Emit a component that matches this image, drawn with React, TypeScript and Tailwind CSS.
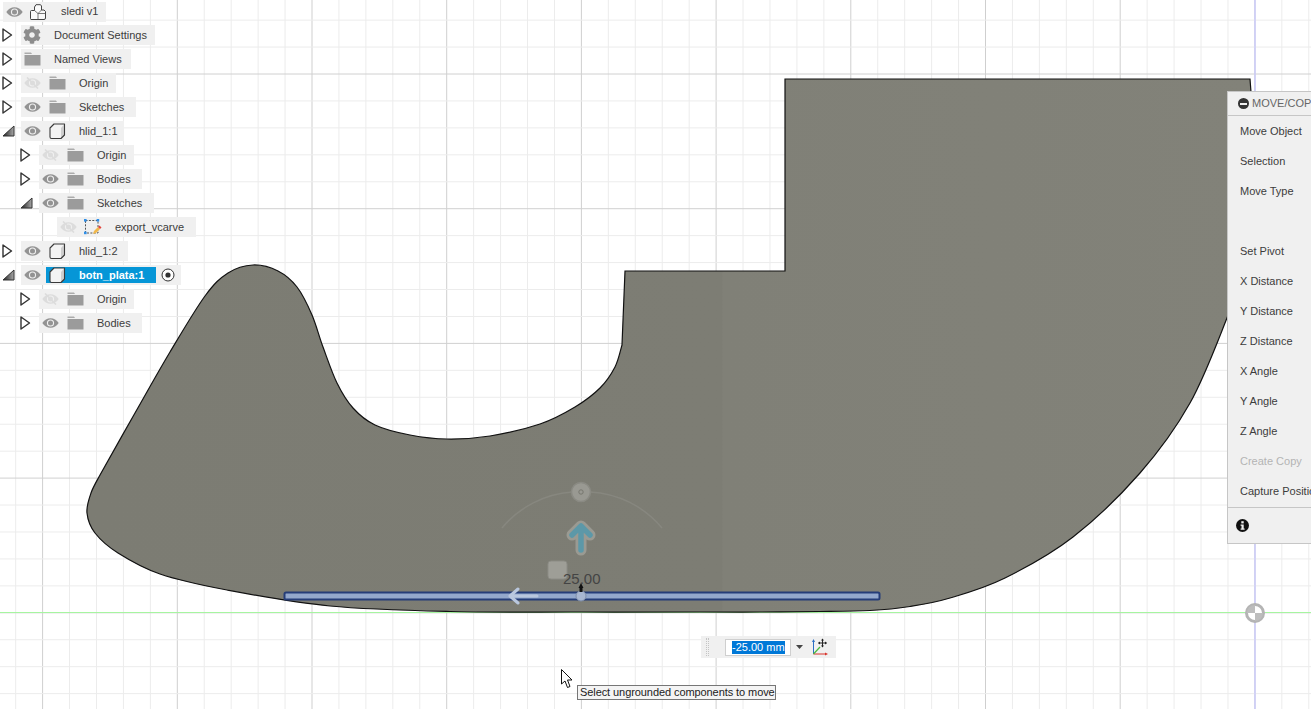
import { FaCog } from 'react-icons/fa'

const FONT = "font-['Liberation_Sans',Arial,sans-serif]"

// grid positions come from the one spacing the viewport uses
const STEP = 26.94
const gridX = Array.from({ length: 50 }, (_, i) => 1308.78 - i * STEP).filter((x) => x > -1)
const gridY = Array.from({ length: 27 }, (_, i) => 20.12 + i * STEP).filter((y) => y < 710)
const isMajor = (i: number) => (i - 2) % 5 === 0

type Pt = [number, number]

// catmull-rom through traced points, the outline has no straight runs here
function smooth(pts: Pt[]) {
  let d = ''
  for (let i = 0; i < pts.length - 1; i++) {
    const p0 = pts[Math.max(i - 1, 0)]
    const p1 = pts[i]
    const p2 = pts[i + 1]
    const p3 = pts[Math.min(i + 2, pts.length - 1)]
    const c1x = p1[0] + (p2[0] - p0[0]) / 6
    const c1y = p1[1] + (p2[1] - p0[1]) / 6
    const c2x = p2[0] - (p3[0] - p1[0]) / 6
    const c2y = p2[1] - (p3[1] - p1[1]) / 6
    d += ` C${c1x.toFixed(1)} ${c1y.toFixed(1)} ${c2x.toFixed(1)} ${c2y.toFixed(1)} ${p2[0]} ${p2[1]}`
  }
  return d
}

const rightAndBottom: Pt[] = [
  [1240, 280], [1227, 318], [1190, 403], [1140, 473], [1073, 537], [1005, 578], [950, 598], [910, 606.5],
  [870, 610.5], [820, 611.5], [760, 612], [700, 612], [580, 612], [450, 611.5], [330, 606], [227, 590],
  [160, 574], [118, 553], [95, 533], [87, 513], [91, 493], [100, 475],
]
const hump: Pt[] = [
  [100, 475], [135, 413], [170, 352], [205, 296], [228, 273], [253, 265], [278, 271], [297, 287], [312, 315],
  [323, 347], [337, 383], [353, 408], [375, 425], [410, 435], [447, 439], [490, 436], [540, 424], [575, 407],
  [600, 388], [615, 367], [622, 345],
]

const PLATE =
  'M785 79 L1250 79 L1251 92 L1254 200 L1240 280' +
  smooth(rightAndBottom) +
  smooth(hump) +
  ' L625 271 L785 271 Z'

function GridAndPart() {
  return (
    <svg className="absolute inset-0" width="1311" height="709" viewBox="0 0 1311 709">
      <defs>
        <linearGradient id="plateShade" gradientUnits="userSpaceOnUse" x1="87" y1="0" x2="1256" y2="0">
          <stop offset="0" stopColor="#7c7c73" />
          <stop offset="0.543" stopColor="#7d7d74" />
          <stop offset="0.544" stopColor="#808077" />
          <stop offset="1" stopColor="#828279" />
        </linearGradient>
      </defs>
      {gridX.map((x, i) => (
        <line key={x} x1={x} x2={x} y1="0" y2="709" stroke={isMajor(i) ? '#cfcfcf' : '#ececec'} strokeWidth="1" />
      ))}
      {gridY.map((y, i) => (
        <line key={y} x1="0" x2="1311" y1={y} y2={y} stroke={isMajor(i) ? '#d0d0d0' : '#ececec'} strokeWidth="1" />
      ))}
      <line x1="1255" x2="1255" y1="0" y2="709" stroke="#c9c9fb" strokeWidth="1.4" />
      <line x1="0" x2="1311" y1="612.5" y2="612.5" stroke="#a6f5a0" strokeWidth="1.2" />
      <path d={PLATE} fill="url(#plateShade)" stroke="#111" strokeWidth="1.2" strokeLinejoin="miter" />

      {/* move gizmo */}
      <path d="M502 528 A 100 100 0 0 1 572 492" fill="none" stroke="#87877f" strokeWidth="1.5" />
      <path d="M590 492 A 100 100 0 0 1 662 528" fill="none" stroke="#87877f" strokeWidth="1.5" />
      <circle cx="581" cy="492" r="9.5" fill="#999992" stroke="#8a8a83" strokeWidth="1.5" />
      <circle cx="581" cy="492" r="2.2" fill="none" stroke="#77776f" />
      <path d="M581 550 V527 M572 535 L581 526 L590 535" fill="none" stroke="#9a9a92" strokeWidth="11" strokeLinecap="round" strokeLinejoin="round" />
      <path d="M581 550 V527 M572 535 L581 526 L590 535" fill="none" stroke="#5c98a8" strokeWidth="5.5" strokeLinecap="round" strokeLinejoin="round" />
      <rect x="548" y="561" width="19" height="18" rx="3" fill="#9e9e97" stroke="#8c8c85" />

      {/* selected face seen edge on */}
      <rect x="284.5" y="592.5" width="595" height="7" rx="1.5" fill="#93a8cc" stroke="#253d78" strokeWidth="2" />
      <path d="M510 596 L518 589 M510 596 L518 603 M511 596 L537 596" stroke="#b9c7de" strokeWidth="3" strokeLinecap="round" />
      <circle cx="581" cy="596" r="5" fill="#a8b7d2" stroke="#7f8fab" />
      <path d="M581 583 L583.5 588 L582.5 588 L582.5 592 L579.5 592 L579.5 588 L578.5 588 Z" fill="#111" />

      {/* origin */}
      <circle cx="1255" cy="613" r="8.5" fill="#fff" stroke="#b4b4b4" strokeWidth="3" />
      <path d="M1255 613 L1247 613 A 8 8 0 0 1 1255 605 Z" fill="#bdbdbd" />
      <path d="M1255 613 L1263 613 A 8 8 0 0 1 1255 621 Z" fill="#bdbdbd" />

      {/* pointer */}
      <path d="M561.5 669.5 L561.5 684 L565 681 L567.5 687.5 L570 686.5 L567.5 680 L572 680 Z" fill="#fff" stroke="#111" strokeWidth="1" strokeLinejoin="round" />
    </svg>
  )
}

function Eye({ off }: { off?: boolean }) {
  const color = off ? '#dcdcdc' : '#939393'
  return (
    <svg width="17" height="12" viewBox="0 0 17 12">
      <path d="M0.3 6 C4 -0.3 13 -0.3 16.7 6 C13 12.3 4 12.3 0.3 6 Z" fill={color} />
      <circle cx="8.5" cy="6" r="3.6" fill="#f0f0f0" />
      <circle cx="8.5" cy="6" r="2.5" fill={color} />
      {off && <path d="M3 0.5 L14 11.5" stroke="#dcdcdc" strokeWidth="1.6" />}
    </svg>
  )
}

function Folder() {
  return (
    <svg width="17" height="14" viewBox="0 0 17 14">
      <path d="M0.5 0.5 H7 L8 2 H0.5 Z" fill="#ababab" />
      <rect x="0.5" y="3" width="16" height="10.5" fill="#9b9b9b" />
    </svg>
  )
}

function Cube() {
  return (
    <svg width="17" height="17" viewBox="0 0 17 17">
      <path d="M1 5 L5 1 L15.5 1 L15.5 12 L12 15.5 L2.5 15.5 Q1 15.5 1 14 Z" fill="#f3f3f3" />
      <path d="M12 5 L15.5 1 L15.5 12 L12 15.5 Z" fill="#cfcfcf" />
      <path d="M1 5 L5 1 L15.5 1 L15.5 12 L12 15.5 L2.5 15.5 Q1 15.5 1 14 Z" fill="none" stroke="#3a3a3a" strokeWidth="1.1" strokeLinejoin="round" />
    </svg>
  )
}

function RootIcon() {
  return (
    <svg width="16" height="16" viewBox="0 0 16 16">
      <path d="M1 15.5 Q0.5 15.5 0.5 14.5 V7.5 Q0.5 6.5 1.5 6.5 H4.5 V3 L6 0.7 H10.5 L11.5 2 V6 H14 L15.5 7.5 V14 Q15.5 15.5 14 15.5 Z" fill="#fafafa" stroke="#444" strokeWidth="1" strokeLinejoin="round" />
      <path d="M4.5 6.5 L8 9.5 L11.5 6 M8 9.5 V15.5 M8 9.5 H15.5" fill="none" stroke="#555" strokeWidth="0.8" />
    </svg>
  )
}

function SketchIcon() {
  return (
    <svg width="18" height="17" viewBox="0 0 18 17">
      <rect x="1.5" y="1.5" width="12.5" height="12.5" fill="none" stroke="#444" strokeWidth="0.9" strokeDasharray="2 1.4" />
      <rect x="0" y="0" width="2.6" height="2.6" fill="#2f8fe8" />
      <rect x="12.6" y="0" width="2.6" height="2.6" fill="#2f8fe8" />
      <rect x="0" y="12.6" width="2.6" height="2.6" fill="#2f8fe8" />
      <path d="M9 15 L10 12 L14 8 L16 10 L12 14 Z" fill="#f1b84a" />
      <path d="M14 8 L15.5 6.5 L17.5 8.5 L16 10 Z" fill="#e2443c" />
    </svg>
  )
}

function Caret({ open }: { open?: boolean }) {
  if (open) {
    return (
      <svg width="13" height="12" viewBox="0 0 13 12">
        <defs>
          <linearGradient id="caretShade" x1="0" y1="0" x2="1" y2="0">
            <stop offset="0" stopColor="#222" />
            <stop offset="1" stopColor="#a8a8a8" />
          </linearGradient>
        </defs>
        <path d="M1 11 L12 1 L12 11 Z" fill="url(#caretShade)" stroke="#333" strokeWidth="1" />
      </svg>
    )
  }
  return (
    <svg width="11" height="14" viewBox="0 0 11 14">
      <path d="M1 1 L9.5 7 L1 13 Z" fill="#fff" stroke="#333" strokeWidth="1.4" strokeLinejoin="round" />
    </svg>
  )
}

type TreeRow = {
  label: string
  width: string
  depth?: number
  caret?: 'open' | 'closed'
  eye?: 'on' | 'off'
  icon: 'folder' | 'cube' | 'gear' | 'sketch'
  active?: boolean
}

const rows: TreeRow[] = [
  { label: 'Document Settings', width: 'w-[134px]', caret: 'closed', icon: 'gear' },
  { label: 'Named Views', width: 'w-[110px]', caret: 'closed', icon: 'folder' },
  { label: 'Origin', width: 'w-[95px]', caret: 'closed', eye: 'off', icon: 'folder' },
  { label: 'Sketches', width: 'w-[115px]', caret: 'closed', eye: 'on', icon: 'folder' },
  { label: 'hlid_1:1', width: 'w-[103px]', caret: 'open', eye: 'on', icon: 'cube' },
  { label: 'Origin', width: 'w-[95px]', depth: 1, caret: 'closed', eye: 'off', icon: 'folder' },
  { label: 'Bodies', width: 'w-[103px]', depth: 1, caret: 'closed', eye: 'on', icon: 'folder' },
  { label: 'Sketches', width: 'w-[115px]', depth: 1, caret: 'open', eye: 'on', icon: 'folder' },
  { label: 'export_vcarve', width: 'w-[139px]', depth: 2, eye: 'off', icon: 'sketch' },
  { label: 'hlid_1:2', width: 'w-[107px]', caret: 'closed', eye: 'on', icon: 'cube' },
  { label: 'botn_plata:1', width: 'w-[160px]', caret: 'open', eye: 'on', icon: 'cube', active: true },
  { label: 'Origin', width: 'w-[95px]', depth: 1, caret: 'closed', eye: 'off', icon: 'folder' },
  { label: 'Bodies', width: 'w-[103px]', depth: 1, caret: 'closed', eye: 'on', icon: 'folder' },
]

function RowIcon({ icon }: { icon: TreeRow['icon'] }) {
  if (icon === 'folder') return <Folder />
  if (icon === 'cube') return <Cube />
  if (icon === 'sketch') return <SketchIcon />
  return <FaCog className="w-[18px] h-[18px] text-[#8d8d8d]" />
}

function BrowserRow({ row }: { row: TreeRow }) {
  const indent = row.depth === 1 ? 'pl-[18px]' : row.depth === 2 ? 'pl-[36px]' : 'pl-0'
  return (
    <div className={`flex items-center h-6 ${indent}`}>
      <div className="w-[21px] h-5 flex items-center pl-[2px] shrink-0">
        {row.caret && <Caret open={row.caret === 'open'} />}
      </div>
      <div className={`flex items-center h-5 bg-[#f0f0f0] ${row.width}`}>
        {row.eye && (
          <div className="w-[25px] flex justify-center pr-[3px]">
            <Eye off={row.eye === 'off'} />
          </div>
        )}
        {row.active ? (
          <>
            <div className="flex items-center h-4 w-[110px] bg-[#0696d7]">
              <div className="w-[22px] flex justify-center">
                <RowIcon icon={row.icon} />
              </div>
              <span className="ml-[11px] text-white font-bold">{row.label}</span>
            </div>
            <div className="w-[23px] flex justify-center">
              <svg width="14" height="14" viewBox="0 0 14 14">
                <circle cx="7" cy="7" r="6" fill="#fff" stroke="#333" />
                <circle cx="7" cy="7" r="2.6" fill="#333" />
              </svg>
            </div>
          </>
        ) : (
          <>
            <div className="w-[22px] flex justify-center">
              <RowIcon icon={row.icon} />
            </div>
            <span className="ml-[11px] whitespace-nowrap text-[#3c3c3c]">{row.label}</span>
          </>
        )}
      </div>
    </div>
  )
}

function Browser() {
  return (
    <div className="absolute left-0 top-0 text-[11px] leading-none">
      <div className="flex items-center h-[23px] pl-[3px]">
        <div className="flex items-center h-5 w-[103px] bg-[#f0f0f0]">
          <div className="w-[22px] flex justify-center">
            <Eye />
          </div>
          <div className="w-[26px] flex justify-center">
            <RootIcon />
          </div>
          <span className="ml-[10px] text-[#3c3c3c]">sledi v1</span>
        </div>
      </div>
      {rows.map((row, i) => (
        <BrowserRow key={i} row={row} />
      ))}
    </div>
  )
}

const panelRows = [
  'Move Object',
  'Selection',
  'Move Type',
  '',
  'Set Pivot',
  'X Distance',
  'Y Distance',
  'Z Distance',
  'X Angle',
  'Y Angle',
  'Z Angle',
  'Create Copy',
  'Capture Position',
]

function MovePanel() {
  return (
    <div className="absolute left-[1227px] top-[91px] w-[84px] h-[453px] bg-[#f0f0f0] border-l border-y border-[#c6c6c6] overflow-hidden text-[11px] leading-none whitespace-nowrap">
      <div className="flex items-center h-6 border-b border-[#c6c6c6] pl-[3px] text-[#666666]">
        <div className="w-px h-2 bg-[#777]" />
        <div className="ml-[7px] w-[11px] h-[11px] rounded-full bg-[#333] flex items-center justify-center shrink-0">
          <div className="w-[7px] h-[2px] bg-[#f0f0f0]" />
        </div>
        <span className="ml-[3px]">MOVE/COPY</span>
      </div>
      {panelRows.map((label, i) => (
        <div
          key={i}
          className={`flex items-center h-[30px] pl-3 ${label === 'Create Copy' ? 'text-[#b4b4b4]' : 'text-[#3c3c3c]'}`}
        >
          {label}
        </div>
      ))}
      <div className="border-t border-[#c6c6c6] mt-px h-[36px] flex items-center pl-2">
        <svg width="13" height="13" viewBox="0 0 13 13">
          <circle cx="6.5" cy="6.5" r="6.5" fill="#111" />
          <rect x="5.3" y="2.2" width="2.4" height="2.2" fill="#f0f0f0" />
          <path d="M4.6 5.5 H7.7 V9.6 H8.6 V10.8 H4.6 V9.6 H5.5 V6.7 H4.6 Z" fill="#f0f0f0" />
        </svg>
      </div>
    </div>
  )
}

function DistanceInput() {
  return (
    <div className="absolute left-[701px] top-[636px] w-[135px] h-[22px] bg-[#f0f0f0] flex items-center pl-[5px] text-[11px] leading-none">
      <div className="w-[3px] h-[18px] border-x border-dotted border-[#c4c4c4]" />
      <div className="ml-[16px] w-[66px] h-[17px] bg-white border border-[#cfcfcf] flex items-center pl-[6px]">
        <span className="bg-[#0078d7] text-white h-[13px] flex items-center whitespace-nowrap">-25.00 mm</span>
      </div>
      <svg className="ml-[5px]" width="7" height="4" viewBox="0 0 7 4">
        <path d="M0 0 H7 L3.5 4 Z" fill="#444" />
      </svg>
      <svg className="ml-[7px]" width="18" height="18" viewBox="0 0 18 18">
        <path d="M3.5 16 L3.5 2" stroke="#2c6fc4" strokeWidth="1" />
        <path d="M2 4 L3.5 1 L5 4 Z" fill="#2c6fc4" />
        <path d="M3.5 16 L16 16" stroke="#d8342c" strokeWidth="1" />
        <path d="M15 14.5 L18 16 L15 17.5 Z" fill="#d8342c" />
        <path d="M3.5 16 L10 9" stroke="#48b83c" strokeWidth="1.2" />
        <path d="M12.5 1 V9 M8.5 5 H16.5" stroke="#222" strokeWidth="1" />
        <path d="M12.5 0.5 L14 2.5 H11 Z M12.5 9.5 L14 7.5 H11 Z M8 5 L10 3.5 V6.5 Z M17 5 L15 3.5 V6.5 Z" fill="#222" />
      </svg>
    </div>
  )
}

export default function App() {
  return (
    <div className={`relative w-[1311px] h-[709px] overflow-hidden bg-white ${FONT}`}>
      <GridAndPart />
      <Browser />
      <MovePanel />
      <div className="absolute left-[563px] top-[570px] text-[15px] leading-[17px] text-[#444]">25.00</div>
      <DistanceInput />
      <div className="absolute left-[577px] top-[685px] w-[199px] h-[15px] pl-[2px] flex items-center border border-[#767676] bg-[#f4f4f4] text-[11px] leading-none tracking-[-0.08px] text-[#222] whitespace-nowrap">
        Select ungrounded components to move
      </div>
    </div>
  )
}
